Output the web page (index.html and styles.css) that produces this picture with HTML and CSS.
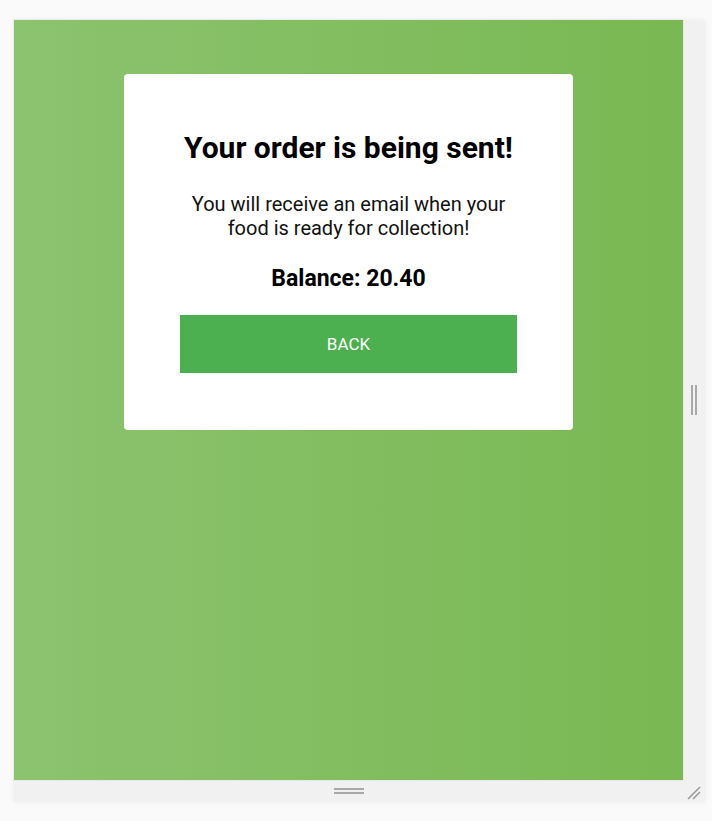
FILE: index.html
```html
<!DOCTYPE html>
<html>
<head>
<meta charset="utf-8">
<link rel="stylesheet" href="styles.css">
</head>
<body>
<div class="frame">
  <div class="row">
    <div class="stage">
      <div class="card">
        <h1 class="title">Your order is being sent!</h1>
        <p class="msg">You will receive an email when your<br>food is ready for collection!</p>
        <p class="balance">Balance: 20.40</p>
        <button class="btn">BACK</button>
      </div>
    </div>
    <div class="side">
      <div class="vgrip"></div>
    </div>
  </div>
  <div class="bottom">
    <div class="hgrip"></div>
    <svg class="corner" width="14" height="14" viewBox="0 0 14 14">
      <line x1="1" y1="13" x2="13" y2="1" stroke="#9a9a9a" stroke-width="1.6"/>
      <line x1="6" y1="13" x2="13" y2="6" stroke="#9a9a9a" stroke-width="1.6"/>
    </svg>
  </div>
</div>
</body>
</html>
```
FILE: styles.css
```css
html, body {
  margin: 0;
  padding: 0;
}
body {
  background: #fafafa;
  font-family: Roboto, "Liberation Sans", sans-serif;
  width: 712px;
  height: 821px;
  overflow: hidden;
}
.frame {
  margin: 20px 0 0 14px;
  width: 691px;
  background: #f1f1f1;
  box-shadow: 0 0 6px rgba(0,0,0,0.06);
}
.row {
  display: flex;
}
.stage {
  width: 669px;
  height: 760px;
  background: linear-gradient(to right, #8cc36f, #79b852);
  display: flex;
  justify-content: center;
  align-items: flex-start;
  box-shadow: 0 0 0 1px rgba(0,0,0,0.04);
}
.card {
  margin-top: 54px;
  width: 449px;
  box-sizing: border-box;
  padding: 52px 56px 57px;
  background: #fff;
  border-radius: 4px;
  text-align: center;
}
.title {
  margin: 0;
  font-size: 30px;
  font-weight: 700;
  line-height: 44px;
  color: #000;
}
.msg {
  margin: 22px 0 0;
  font-size: 20px;
  line-height: 24px;
  color: #111;
}
.balance {
  margin: 24px 0 0;
  font-size: 23px;
  font-weight: 700;
  line-height: 30px;
  color: #000;
}
.btn {
  margin-top: 21px;
  display: block;
  width: 100%;
  height: 58px;
  border: none;
  border-radius: 0;
  background: #4caf50;
  color: #fff;
  font-family: Roboto, "Liberation Sans", sans-serif;
  font-size: 17px;
}
.side {
  width: 22px;
  display: flex;
  align-items: center;
  justify-content: center;
}
.vgrip {
  width: 2px;
  height: 30px;
  border-left: 2px solid #a8a8a8;
  border-right: 2px solid #a8a8a8;
  margin-left: -1px;
}
.bottom {
  height: 22px;
  position: relative;
  display: flex;
  justify-content: center;
  align-items: center;
  padding-right: 22px;
}
.hgrip {
  width: 30px;
  height: 2px;
  border-top: 2px solid #a8a8a8;
  border-bottom: 2px solid #a8a8a8;
  margin-left: 1px;
}
.corner {
  position: absolute;
  right: 4px;
  bottom: 2px;
}
```
